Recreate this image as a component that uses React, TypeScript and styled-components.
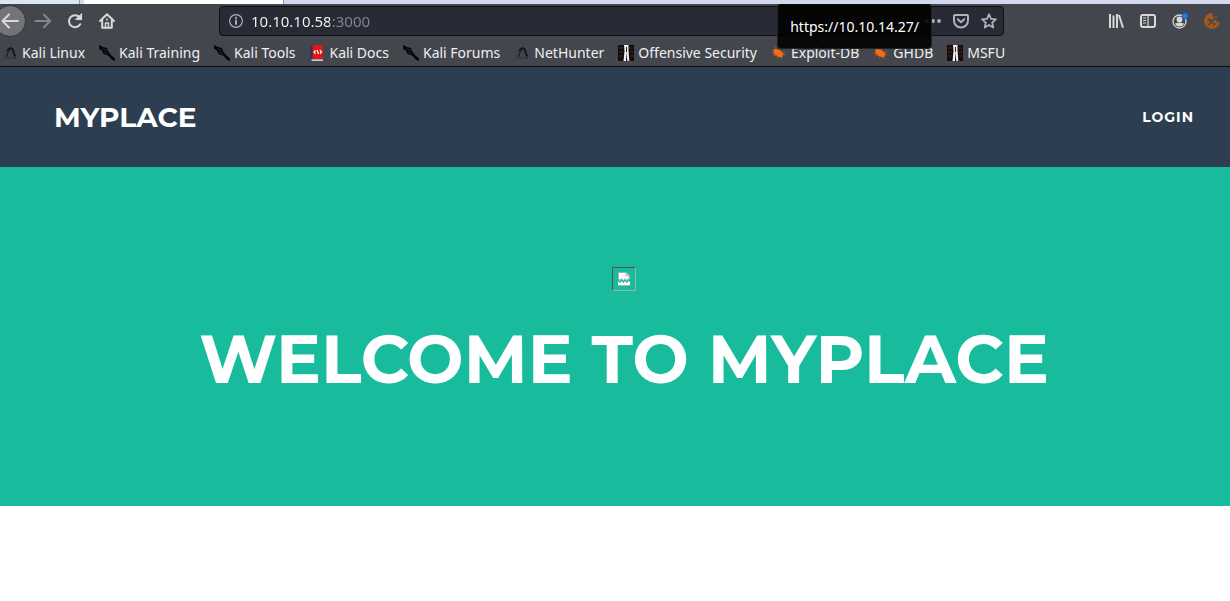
import React from "react";
import styled, { createGlobalStyle } from "styled-components";

const GlobalStyle = createGlobalStyle`
  * { box-sizing: border-box; }
  body { margin: 0; background: #fff; overflow-x: hidden; }
  button, input { font: inherit; border: 0; padding: 0; background: none; }
  svg { display: block; flex: none; }
`;

const uiFont = `"Noto Sans", "Open Sans", sans-serif`;
const siteFont = `"Montserrat", "Inter", sans-serif`;

const TabStrip = styled.div`
  display: flex;
  height: 4px;
  background: #d3daee;
`;

const Tab = styled.div<{ $width: number; $active?: boolean }>`
  width: ${(p) => p.$width}px;
  background: ${(p) => (p.$active ? "#fff" : "#dbe6f4")};
  border-right: 1px solid #8b9cb0;
  margin-right: ${(p) => (p.$active ? 0 : 4)}px;
`;

const Chrome = styled.header`
  background: #43464d;
  border-bottom: 1px solid #0c0c0d;
  font-family: ${uiFont};
  font-size: 14px;
  line-height: 20px;
  color: #f0f0f1;
`;

const Toolbar = styled.div`
  display: flex;
  align-items: center;
  height: 34px;
`;

const ToolButton = styled.button<{ $dim?: boolean }>`
  display: grid;
  place-items: center;
  flex: none;
  width: 32px;
  height: 32px;
  color: ${(p) => (p.$dim ? "#85878b" : "#d8d8d9")};
`;

const BackButton = styled(ToolButton)`
  margin: 0 1px 0 -6px;
  border-radius: 50%;
  background: #737477;
  border: 1px solid #333539;
`;

const AddressBar = styled.div`
  position: relative;
  display: flex;
  align-items: center;
  flex: 1;
  min-width: 0;
  height: 30px;
  margin: 0 96px;
  padding: 0 6px 0 8px;
  border: 1px solid #0f1014;
  border-radius: 4px;
  background: #282a35;
  color: #b1b2b7;
`;

const AddressInput = styled.input`
  flex: 1;
  min-width: 0;
  margin-left: 7px;
  outline: 0;
  font-size: 15px;
  background: linear-gradient(90deg, #f9f9fa 79px, #85868e 79px);
  background-clip: text;
  -webkit-background-clip: text;
  color: transparent;
`;

const AddressActions = styled.div`
  display: flex;
  gap: 12px;
`;

const AddressButton = styled.button`
  color: inherit;
`;

const Tooltip = styled.div`
  position: absolute;
  z-index: 2;
  top: -3px;
  right: 71px;
  padding: 13px 12px 11px;
  border-radius: 4px;
  background: rgba(0, 0, 0, 0.88);
  color: #fff;
  white-space: nowrap;
  border: 1px solid rgba(40, 40, 42, 0.8);
  border-top: 0;
`;

const ToolGroup = styled.div`
  display: flex;
  margin-right: 2px;
`;

const Bookmarks = styled.nav`
  display: flex;
  align-items: center;
  gap: 14px;
  height: 28px;
  padding: 2px 0 0 2px;
`;

const Bookmark = styled.a`
  display: flex;
  align-items: center;
  gap: 4px;
  color: inherit;
  text-decoration: none;
  white-space: nowrap;
`;

const SiteNav = styled.nav`
  display: flex;
  align-items: center;
  justify-content: space-between;
  height: 100px;
  padding: 0 36px 0 54px;
  background: #2c3e50;
  font-family: ${siteFont};
  font-weight: 700;
`;

const Brand = styled.a`
  color: #fff;
  font-size: 28px;
  line-height: 42px;
  text-decoration: none;
`;

const LoginLink = styled.a`
  color: #fff;
  font-size: 14px;
  line-height: 20px;
  letter-spacing: 1px;
  text-decoration: none;
`;

const Hero = styled.main`
  display: flex;
  flex-direction: column;
  align-items: center;
  gap: 30px;
  padding: 100px 0 108px 18px;
  background: #18bc9c;
`;

const MissingImage = styled.div`
  display: grid;
  place-items: center;
  width: 24px;
  height: 24px;
  border: 1px solid;
  border-color: #51535a #a9aeb0 #a9aeb0 #51535a;
`;

const Title = styled.h1`
  margin: 0;
  color: #fff;
  font-family: ${siteFont};
  font-size: 67px;
  font-weight: 700;
  line-height: 77px;
  white-space: nowrap;
`;

const stroke = { fill: "none", stroke: "currentColor", strokeWidth: 2, strokeLinecap: "round", strokeLinejoin: "round" } as const;

const BackIcon = () => (
  <svg width="18" height="18" viewBox="0 0 18 18" {...stroke}><path d="M17 9H2M8 2.5 1.5 9 8 15.5" /></svg>
);
const ForwardIcon = () => (
  <svg width="18" height="18" viewBox="0 0 18 18" {...stroke}><path d="M1.500 9H16M10 2.800 16.200 9 10 15.200" /></svg>
);
const ReloadIcon = () => (
  <svg width="16" height="16" viewBox="0 0 16 16" {...stroke}>
    <path d="M13.200 11.200A6 6 0 1 1 12.500 4.200" />
    <path d="M14.600 1v5.600H9z" fill="currentColor" strokeWidth="1" />
  </svg>
);
const HomeIcon = () => (
  <svg width="16" height="16" viewBox="0 0 16 16" {...stroke}>
    <path d="M1 8 8 1.300 15 8M3.200 7v7.800h9.600V7" />
    <path d="M6.500 15v-5h3v5" strokeWidth="1.500" />
    <path d="M8 6v1" strokeWidth="1.500" />
  </svg>
);
const InfoIcon = () => (
  <svg width="16" height="16" viewBox="0 0 16 16" {...stroke} strokeWidth="1.200">
    <circle cx="8" cy="8" r="6.400" /><path d="M8 7.500v3.500" strokeWidth="2" /><path d="M8 4.800v.2" strokeWidth="2" />
  </svg>
);
const DotsIcon = () => (
  <svg width="16" height="16" viewBox="0 0 16 16" fill="currentColor">
    <circle cx="2" cy="8" r="1.900" /><circle cx="8" cy="8" r="1.900" /><circle cx="14" cy="8" r="1.900" />
  </svg>
);
const PocketIcon = () => (
  <svg width="16" height="16" viewBox="0 0 16 16" {...stroke}>
    <path d="M2 2h12c.6 0 1 .4 1 1v4.500a7 7 0 0 1-14 0V3c0-.6.4-1 1-1z" /><path d="m4.800 6.300 3.200 3 3.200-3" />
  </svg>
);
const StarIcon = () => (
  <svg width="16" height="16" viewBox="0 0 16 16" {...stroke} strokeWidth="1.800">
    <path d="m8 1.300 2 4.500 4.900.5-3.700 3.300 1.100 4.900L8 12l-4.300 2.500 1.100-4.900L1.100 6.300 6 5.800z" />
  </svg>
);
const LibraryIcon = () => (
  <svg width="16" height="16" viewBox="0 0 16 16" {...stroke} strokeLinecap="butt">
    <path d="M2 1v14M5.500 2.500V15M9 1v14M11 2l4 12.800" />
  </svg>
);
const SidebarIcon = () => (
  <svg width="16" height="16" viewBox="0 0 16 16" {...stroke}>
    <rect x="1" y="2" width="14" height="12" rx="2" />
    <path d="M8 2v12M3.500 5h2M3.500 7.500h2M3.500 10h2" strokeWidth="1.200" />
  </svg>
);
const AccountIcon = () => (
  <svg width="16" height="16" viewBox="0 0 16 16">
    <circle cx="7.500" cy="8.500" r="6.500" fill="none" stroke="currentColor" strokeWidth="1.300" />
    <circle cx="7.500" cy="6.500" r="2.900" fill="currentColor" />
    <path d="M2.900 10.400c2 0 2.400-.6 4.600-.6s2.600.6 4.600.6c-.8 1.800-2.400 3-4.600 3s-3.800-1.200-4.600-3z" fill="currentColor" />
    <circle cx="13" cy="3" r="3" fill="#0a84ff" stroke="#43464d" strokeWidth=".5" />
  </svg>
);
const CookieIcon = () => (
  <svg width="16" height="16" viewBox="0 0 16 16">
    <path d="M8.500 0A8 8 0 1 0 16 9c-1.600.8-3.200 0-3.400-1.600C10.500 7.400 9.500 6 10 4.400 8.500 3.600 8 1.700 8.500 0z" fill="#a3561d" />
    <circle cx="12" cy="4" r="1" fill="#a3561d" />
    <path d="m5 6 6 6M10 6l-5.500 6M4 7.500l2-2M9.500 12.500l2-2" stroke="#43464d" strokeWidth="1.500" />
  </svg>
);

const LinuxMark = () => (
  <svg width="16" height="16" viewBox="0 0 16 16">
    <path d="M5.500 6.500C6 4 8 3 9.500 3.500c2 .6 2 4 3 6.500l1 1.500" fill="none" stroke="#141517" strokeWidth="2" />
    <path d="M8 4.500C5.500 6.500 5 9 4.500 12" fill="none" stroke="#242629" strokeWidth="1.500" />
    <path d="M1 13.500c4-1 9-1 13 0M9 9l2.500-1" fill="none" stroke="#303236" strokeWidth="1" />
  </svg>
);
const KnifeMark = () => (
  <svg width="16" height="16" viewBox="0 0 16 16">
    <path d="M0 0 4 2l4 1 1 3 3 4 4 3.500V16l-3-1.200-4-4.300L4.500 9 3 5.500 0 3.800z" fill="#050506" />
    <path d="m3 3 5 3M5 7l4 2" stroke="#35373b" strokeWidth=".7" />
  </svg>
);
const DocsMark = () => (
  <svg width="16" height="16" viewBox="0 0 16 16">
    <path d="M2 0h12v14H2z" fill="#dc1919" /><path d="M1.500.5h2V15h-2z" fill="#25345c" />
    <path d="M2.500 14.300H14V16H2.500z" fill="#c9cbce" />
    <path d="M6.500 5.500 5 7l1.500 2M8 5l1.500 4M11 5l1.500 2L11 8.500" fill="none" stroke="#fff" strokeWidth="1.200" />
  </svg>
);
const OffsecMark = () => (
  <svg width="16" height="16" viewBox="0 0 16 16">
    <path d="M0 0h16v16H0z" fill="#190b0b" />
    <path d="M1 3h4M11 3h4M1 7h4M12 7h3M1 11h3M12 11h4" stroke="#4a2a29" strokeWidth="1.200" />
    <path d="M6 0h4.500v5l.8 11H9.300L8.500 7 8 16H5.500L6.500 6z" fill="#efefef" />
    <path d="M8 2h1v5H8z" fill="#292020" />
  </svg>
);
const BugMark = () => (
  <svg width="16" height="16" viewBox="0 0 16 16">
    <path d="M2 4.500 5.500 4l4 1.500 3 3.200-1.300 3.600-3.500-.3L3 9z" fill="#f36c16" />
    <path d="m5 4-1-2M8 5l1-2.500M11 7h3M12 9l2 1M10 12l1 2M7 11l-1 2M5 10l-3 1M3 8 .5 8" stroke="#ba5519" strokeWidth="1" />
  </svg>
);

const bookmarks: [string, React.ComponentType][] = [
  ["Kali Linux", LinuxMark],
  ["Kali Training", KnifeMark],
  ["Kali Tools", KnifeMark],
  ["Kali Docs", DocsMark],
  ["Kali Forums", KnifeMark],
  ["NetHunter", LinuxMark],
  ["Offensive Security", OffsecMark],
  ["Exploit-DB", BugMark],
  ["GHDB", BugMark],
  ["MSFU", OffsecMark],
];

export default function App() {
  return (
    <>
      <GlobalStyle />
      <TabStrip>
        <Tab $width={80} />
        <Tab $width={200} $active />
      </TabStrip>
      <Chrome>
        <Toolbar>
          <BackButton aria-label="Back"><BackIcon /></BackButton>
          <ToolButton aria-label="Forward" $dim><ForwardIcon /></ToolButton>
          <ToolButton aria-label="Reload"><ReloadIcon /></ToolButton>
          <ToolButton aria-label="Home"><HomeIcon /></ToolButton>
          <AddressBar>
            <InfoIcon />
            <AddressInput aria-label="Address" defaultValue="10.10.10.58:3000" />
            <AddressActions>
              <AddressButton aria-label="Page actions"><DotsIcon /></AddressButton>
              <AddressButton aria-label="Save to Pocket"><PocketIcon /></AddressButton>
              <AddressButton aria-label="Bookmark this page"><StarIcon /></AddressButton>
            </AddressActions>
            <Tooltip role="tooltip">https://10.10.14.27/</Tooltip>
          </AddressBar>
          <ToolGroup>
            <ToolButton aria-label="Library"><LibraryIcon /></ToolButton>
            <ToolButton aria-label="Sidebars"><SidebarIcon /></ToolButton>
            <ToolButton aria-label="Account"><AccountIcon /></ToolButton>
            <ToolButton aria-label="Cookies"><CookieIcon /></ToolButton>
          </ToolGroup>
        </Toolbar>
        <Bookmarks aria-label="Bookmarks">
          {bookmarks.map(([label, Icon]) => (
            <Bookmark key={label} href="#"><Icon />{label}</Bookmark>
          ))}
        </Bookmarks>
      </Chrome>
      <SiteNav aria-label="Site">
        <Brand href="#">MYPLACE</Brand>
        <LoginLink href="#">LOGIN</LoginLink>
      </SiteNav>
      <Hero>
        <MissingImage role="img" aria-label="Profile">
          <svg width="12" height="14" viewBox="0 0 12 14">
            <path d="M.5.500h7.500l3.500 3.500V8l-1.200-1.500L8.800 9 7 6.500 5.500 9 3.500 6.500 2 9 .5 6.500z" fill="#fff" stroke="#a9aeb0" />
            <path d="M8 .5V4h3.500" fill="none" stroke="#a9aeb0" />
            <path d="m0 9 2 2.200L3.700 9l1.800 2.200L7.200 9 9 11.200 10.500 9 12 10v4H0z" fill="#fff" />
            <path d="M0 13.500h12" stroke="#a9aeb0" />
          </svg>
        </MissingImage>
        <Title>WELCOME TO MYPLACE</Title>
      </Hero>
    </>
  );
}
